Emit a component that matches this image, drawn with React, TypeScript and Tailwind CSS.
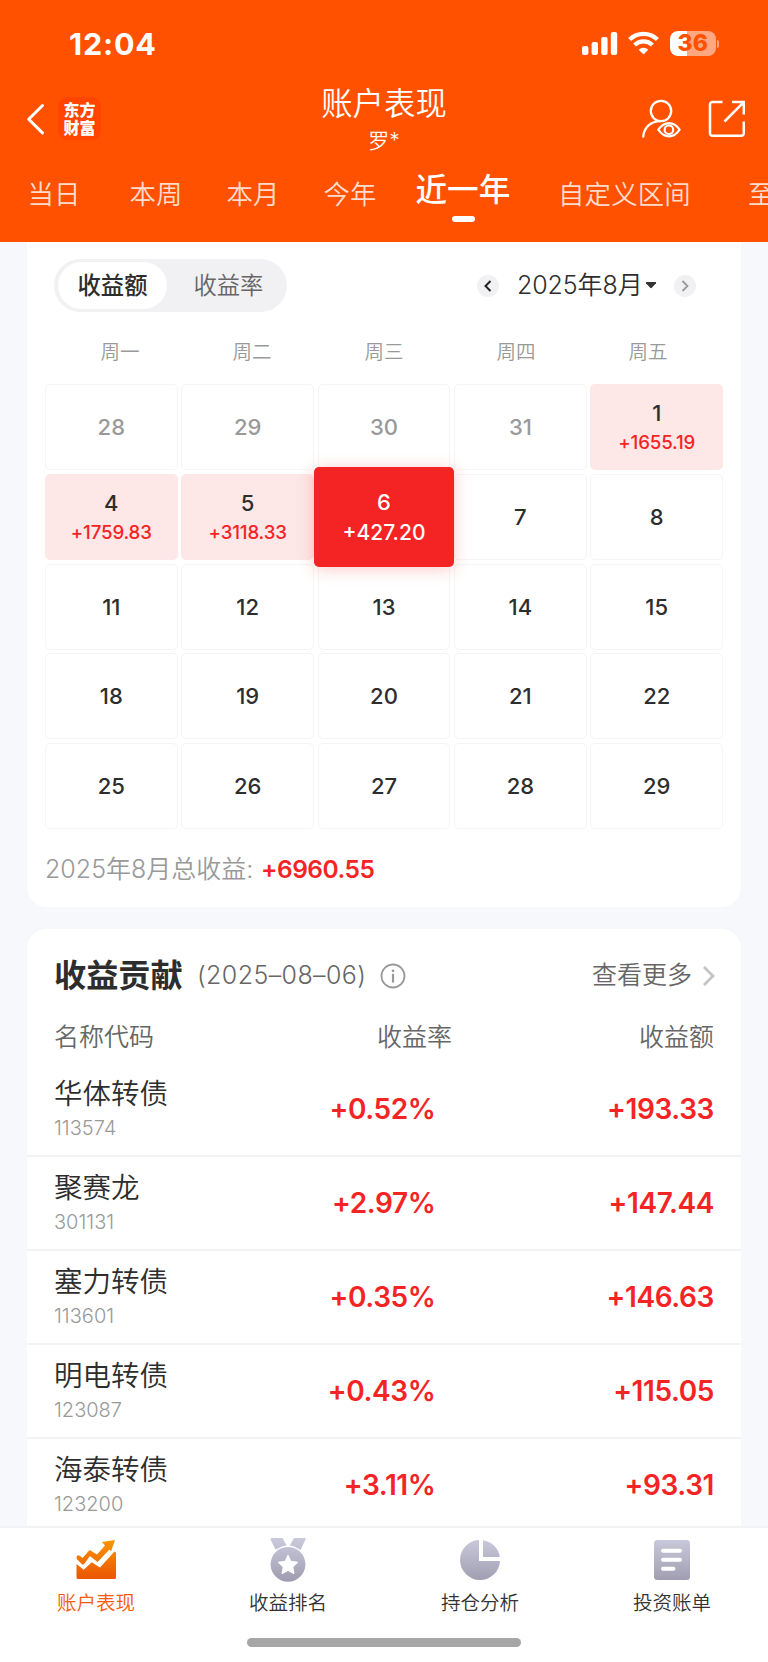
import clsx from 'clsx';

interface Day {
  day: number;
  profit?: string;
  muted?: boolean;
  selected?: boolean;
}

interface Contribution {
  name: string;
  code: string;
  rate: string;
  amount: string;
}

const weekdays = ['周一', '周二', '周三', '周四', '周五'];

const days: Day[] = [
  { day: 28, muted: true },
  { day: 29, muted: true },
  { day: 30, muted: true },
  { day: 31, muted: true },
  { day: 1, profit: '+1655.19' },
  { day: 4, profit: '+1759.83' },
  { day: 5, profit: '+3118.33' },
  { day: 6, profit: '+427.20', selected: true },
  { day: 7 },
  { day: 8 },
  ...[11, 12, 13, 14, 15, 18, 19, 20, 21, 22, 25, 26, 27, 28, 29].map(day => ({ day })),
];

const contributions: Contribution[] = [
  { name: '华体转债', code: '113574', rate: '+0.52%', amount: '+193.33' },
  { name: '聚赛龙', code: '301131', rate: '+2.97%', amount: '+147.44' },
  { name: '塞力转债', code: '113601', rate: '+0.35%', amount: '+146.63' },
  { name: '明电转债', code: '123087', rate: '+0.43%', amount: '+115.05' },
  { name: '海泰转债', code: '123200', rate: '+3.11%', amount: '+93.31' },
];

function StatusBar() {
  return (
    <div className="flex h-[87px] items-start justify-between pl-[69px] pr-[49px] pt-[26px]">
      <span className="text-[30.5px] font-bold leading-[36px] tracking-[0.8px]">12:04</span>
      <div className="flex items-center pt-[5px]">
        <svg width="36" height="25" viewBox="0 0 36 25" fill="currentColor">
          <rect x="0" y="15" width="6.4" height="9" rx="2" />
          <rect x="9.6" y="11" width="6.4" height="13" rx="2" />
          <rect x="19.2" y="6" width="6.4" height="18" rx="2" />
          <rect x="28.8" y="1" width="6.4" height="23" rx="2" />
        </svg>
        <svg className="ml-[10px]" width="31" height="25" viewBox="0 0 31 25" fill="none" stroke="currentColor" strokeWidth="4.2">
          <path d="M1.6 8.6a19.7 19.7 0 0 1 27.8 0" />
          <path d="M6.6 14a12.6 12.6 0 0 1 17.8 0" />
          <path d="M15.5 23.6l-4.8-4.9a6.9 6.9 0 0 1 9.6 0z" fill="currentColor" stroke="none" />
        </svg>
        <div className="ml-[11px] flex h-[25px] w-[45.5px] items-center justify-center rounded-[8px] bg-[linear-gradient(90deg,#fff_36%,#ffa780_36%)] text-[23px] font-extrabold leading-[25px] text-[#ff5100]">
          36
        </div>
        <div className="ml-[1px] h-[8px] w-[2.5px] rounded-r-full bg-[#ffa780]" />
      </div>
    </div>
  );
}

function TitleBar() {
  return (
    <div className="grid h-[75px] grid-cols-[1fr_200px_1fr]">
      <div className="flex items-start pl-[26px] pt-[10px]">
        <svg className="mt-[5px]" width="20" height="34" viewBox="0 0 20 34" fill="none" stroke="currentColor" strokeWidth="3" strokeLinecap="round" strokeLinejoin="round">
          <path d="M16.5 3.5L2.7 17.3l13.8 13.6" />
        </svg>
        <div className="ml-[12px] flex h-[43px] w-[43px] flex-col items-center justify-center rounded-[9px] bg-[#ff4500] text-[16px] font-black leading-[18px]">
          <span>东方</span>
          <span>财富</span>
        </div>
      </div>
      <div className="flex flex-col items-center">
        <h1 className="text-[31.4px] font-[350] leading-[34px]">账户表现</h1>
        <span className="mt-[8px] text-[21px] font-[350] leading-[24px]">罗*</span>
      </div>
      <div className="flex items-start justify-end pr-[23px] pt-[12px]">
        <svg width="42" height="42" viewBox="0 0 42 42" fill="none" stroke="currentColor" strokeWidth="2.3" strokeLinecap="round">
          <circle cx="21" cy="12" r="10.2" />
          <path d="M3.3 37.5c.7-9.2 7.4-15.5 17.7-15.4" />
          <path d="M18.3 30.7c6-8.9 15.500-8.900 21.300 0-5.800 8.900-15.300 8.900-21.300 0z" strokeWidth="2.2" />
          <circle cx="28.9" cy="30.7" r="4.3" strokeWidth="2.2" />
        </svg>
        <svg className="ml-[25px]" width="38" height="38" viewBox="0 0 38 38" fill="none" stroke="currentColor" strokeWidth="2.5" strokeLinejoin="round">
          <path d="M15.5 3H5.500a2.500 2.500 0 0 0-2.500 2.500v29a2.500 2.500 0 0 0 2.500 2.300h29a2.500 2.500 0 0 0 2.300-2.300V22.500" />
          <path d="M25 3h11.800v12.500M36.500 3.300L17.500 22.500" strokeLinejoin="miter" />
        </svg>
      </div>
    </div>
  );
}

function PeriodTabs() {
  return (
    <div className="flex h-[80px] overflow-hidden whitespace-nowrap pl-[27.5px] text-[26.4px] font-[350] leading-[64px] text-[#ffdccc]">
      <span className="w-[102px] shrink-0">当日</span>
      <span className="w-[97px] shrink-0">本周</span>
      <span className="w-[97px] shrink-0">本月</span>
      <span className="w-[92px] shrink-0">今年</span>
      <div className="flex w-[142.5px] shrink-0 flex-col">
        <span className="h-[54px] text-[31.6px] font-medium leading-[56px] text-white">近一年</span>
        <span className="ml-[36px] h-[6px] w-[23.5px] rounded-full bg-white" />
      </div>
      <span className="w-[190px] shrink-0 tracking-[0.2px]">自定义区间</span>
      <span className="shrink-0">至</span>
    </div>
  );
}

function Calendar() {
  return (
    <section className="mx-[27px] h-[665px] rounded-b-[20px] bg-white pt-[17px]">
      <div className="flex h-[53px] items-center justify-between pl-[27px] pr-[45px]">
        <div className="flex h-[53px] w-[233px] items-center rounded-full bg-[#f1f1f4] pl-[4px] text-[23.3px]">
          <span className="flex h-[47px] w-[109px] items-center justify-center rounded-full bg-white pt-px font-medium">收益额</span>
          <span className="flex-1 pl-[26.5px] pt-px font-[350] text-[#666]">收益率</span>
        </div>
        <div className="flex items-center">
          <span className="flex h-[22px] w-[22px] items-center justify-center rounded-full bg-[#f1f1f3]">
            <svg width="8" height="12" viewBox="0 0 8 12" fill="none" stroke="#222" strokeWidth="2">
              <path d="M6.5 1L1.5 6l5 5" />
            </svg>
          </span>
          <span className="ml-[18px] w-[125px] whitespace-nowrap pt-px text-[25px] font-[350] tracking-[-0.1px]">2025年8月</span>
          <svg className="ml-[3px]" width="12" height="7" viewBox="0 0 11 7" fill="#333">
            <path d="M1 0h9q1 .3.5 1.2L6.3 5.8q-.8.7-1.6 0L.5 1.2Q0 .3 1 0z" />
          </svg>
          <span className="ml-[17px] flex h-[22px] w-[22px] items-center justify-center rounded-full bg-[#f1f1f3]">
            <svg width="8" height="12" viewBox="0 0 8 12" fill="none" stroke="#999" strokeWidth="1.8">
              <path d="M1.5 1l5 5-5 5" />
            </svg>
          </span>
        </div>
      </div>

      <div className="grid h-[72px] grid-cols-5 items-center px-[27px] pt-[10px] text-center text-[19.5px] font-[350] text-[#999]">
        {weekdays.map(weekday => (
          <span key={weekday}>{weekday}</span>
        ))}
      </div>

      <div className="grid grid-cols-5 gap-[3.75px] px-[18px]">
        {days.map((item, index) => (
          <div
            key={index}
            className={clsx(
              'flex h-[86px] flex-col items-center justify-center rounded-[5px] text-[22px] font-medium leading-[28px]',
              item.muted && 'text-[#999]',
              item.selected
                ? 'z-10 -mx-[3.8px] -mt-[7.2px] h-[100.5px] bg-[#f52424] pt-px text-white shadow-[0_2px_16px_rgba(245,36,36,0.25)] -mb-[8px]'
                : item.profit
                  ? 'bg-[#fde7e7] pt-[3px]'
                  : 'border border-[#f5f5f5]'
            )}
          >
            <span className={item.selected ? 'leading-[30px]' : ''}>{item.day}</span>
            {item.profit && (
              <span
                className={
                  item.selected
                    ? 'text-[21px] leading-[31px]'
                    : 'text-[18.7px] leading-[31px] tracking-[-0.15px] text-[#f52424]'
                }
              >
                {item.profit}
              </span>
            )}
          </div>
        ))}
      </div>

      <div className="flex h-[82px] items-center pl-[18px] text-[25px] font-[350] text-[#999]">
        <span className="w-[216px] whitespace-nowrap">2025年8月总收益:</span>
        <span className="pb-[2px] text-[24.5px] font-semibold tracking-[-0.5px] text-[#f52424]">+6960.55</span>
      </div>
    </section>
  );
}

function ContributionList() {
  return (
    <section className="mx-[27px] mt-[22px] h-[597px] rounded-t-[20px] bg-white">
      <div className="flex h-[93px] items-center px-[27px]">
        <h2 className="w-[143px] whitespace-nowrap pt-px text-[32.2px] font-bold">收益贡献</h2>
        <span className="w-[170px] whitespace-nowrap pt-px text-[25px] font-[350] tracking-[0.4px] text-[#666]">(2025–08–06)</span>
        <svg className="ml-[12.5px]" width="26" height="26" viewBox="0 0 26 26" fill="none" stroke="#999" strokeWidth="1.8">
          <circle cx="13" cy="13" r="11.5" />
          <path d="M13 10.8v8.7" strokeWidth="2.2" />
          <circle cx="13" cy="7.8" r="1.4" fill="#999" stroke="none" />
        </svg>
        <span className="ml-auto pt-px text-[25px] font-[350] text-[#666]">查看更多</span>
        <svg className="-mr-[2px] ml-[10px]" width="14" height="22" viewBox="0 0 14 22" fill="none" stroke="#c4c4c4" strokeWidth="2.8">
          <path d="M2 2l9 9-9 9" />
        </svg>
      </div>

      <div className="flex h-[40.5px] items-start px-[27px] text-[25px] font-[350] leading-[30px] text-[#666]">
        <span className="w-[240px]">名称代码</span>
        <span className="w-[158px] text-right">收益率</span>
        <span className="flex-1 text-right">收益额</span>
      </div>

      {contributions.map(item => (
        <div key={item.code} className="flex h-[94.1px] items-center border-b-2 border-[#f3f3f4] px-[27px]">
          <div className="w-[220px] pt-[3px]">
            <div className="text-[28.5px] font-[350] leading-[37px]">{item.name}</div>
            <div className="text-[20px] font-[350] leading-[33px] text-[#999]">{item.code}</div>
          </div>
          <span className="w-[161.5px] text-right text-[28px] font-semibold tracking-[-0.4px] text-[#f52424]">{item.rate}</span>
          <span className="flex-1 text-right text-[28px] font-semibold tracking-[-0.4px] text-[#f52424]">{item.amount}</span>
        </div>
      ))}
    </section>
  );
}

function ChartIcon() {
  return (
    <svg width="44" height="44" viewBox="0 0 44 44">
      <defs>
        <linearGradient id="hot" x1="0" y1="0" x2="0" y2="1">
          <stop stopColor="#fb9500" />
          <stop offset="1" stopColor="#ea5504" />
        </linearGradient>
      </defs>
      <path
        d="M41 2L28 4l3 3.500-8 9-7.300-4.500-7.200 8-2.800-2.300q-1.500-1-2.700.2-1 1.500-.2 3l4.900 5q1.300 1 2.500 0L16 18l7.500 6L35.500 11.500l1.500 2zM2.500 26v13.500q0 1.500 1.500 1.500h36.500q1.500 0 1.500-1.500V14.500l-1.500-1L26 29.500l-8.300-5.300-8 7.600z"
        fill="url(#hot)"
      />
    </svg>
  );
}

function MedalIcon() {
  return (
    <svg width="44" height="44" viewBox="0 0 44 44">
      <defs>
        <linearGradient id="cool" x1="0" y1="0" x2="0" y2="44" gradientUnits="userSpaceOnUse">
          <stop stopColor="#cbcadc" />
          <stop offset="1" stopColor="#9f9cb0" />
        </linearGradient>
      </defs>
      <path d="M5.5 0h11l4.500 8-11.500 3.500L4.500 1.500Q4.500 0 5.500 0zM28 0h11q1 .3.500 1.500L34.500 12 23.500 8z" fill="url(#cool)" />
      <circle cx="22" cy="26.3" r="18.8" fill="#fff" />
      <circle cx="22" cy="26.3" r="17.4" fill="url(#cool)" />
      <path
        d="M22 17.5l2.900 5.900 6.500.9-4.700 4.600 1.100 6.500-5.800-3.100-5.800 3.100 1.100-6.500-4.700-4.600 6.500-.9z"
        fill="#fff"
        stroke="#fff"
        strokeWidth="1.2"
        strokeLinejoin="round"
      />
    </svg>
  );
}

function PieIcon() {
  return (
    <svg width="44" height="44" viewBox="0 0 44 44" fill="url(#cool)">
      <path d="M21 2v21h21A20 20 0 1 1 21 2z" />
      <path d="M25 2.2A20 20 0 0 1 41.800 19H25z" />
    </svg>
  );
}

function BillIcon() {
  return (
    <svg width="44" height="44" viewBox="0 0 44 44">
      <rect x="4" y="2" width="36" height="40" rx="3.5" fill="url(#cool)" />
      <path d="M13 12.7h17M13 21.700h17M13 30.700h10.500" stroke="#fff" strokeWidth="4" strokeLinecap="round" />
    </svg>
  );
}

const navItems = [
  { label: '账户表现', icon: ChartIcon, active: true },
  { label: '收益排名', icon: MedalIcon },
  { label: '持仓分析', icon: PieIcon },
  { label: '投资账单', icon: BillIcon },
];

function BottomNav() {
  return (
    <nav className="relative z-10 h-[136px] border-t-2 border-[#f3f3f5] bg-white">
      <div className="grid h-[110px] grid-cols-4">
        {navItems.map(({ label, icon: NavIcon, active }) => (
          <div key={label} className="flex flex-col items-center pt-[10px]">
            <NavIcon />
            <span className={clsx('mt-[6px] text-[19.5px] font-[350] leading-[30px]', active ? 'text-[#f25a0c]' : 'text-[#333]')}>{label}</span>
          </div>
        ))}
      </div>
      <div className="mx-auto h-[9px] w-[274px] rounded-full bg-[#a6a6a6]" />
    </nav>
  );
}

export default function App() {
  return (
    <div className="flex h-[1662px] w-[768px] flex-col overflow-hidden bg-[#f7f8fb] font-['Inter','Noto_Sans_CJK_SC',sans-serif] text-[#2d2d2d]">
      <header className="h-[242px] shrink-0 bg-[#ff5100] text-white">
        <StatusBar />
        <TitleBar />
        <PeriodTabs />
      </header>
      <main className="h-[1284px] shrink-0 overflow-hidden">
        <Calendar />
        <ContributionList />
      </main>
      <BottomNav />
    </div>
  );
}
